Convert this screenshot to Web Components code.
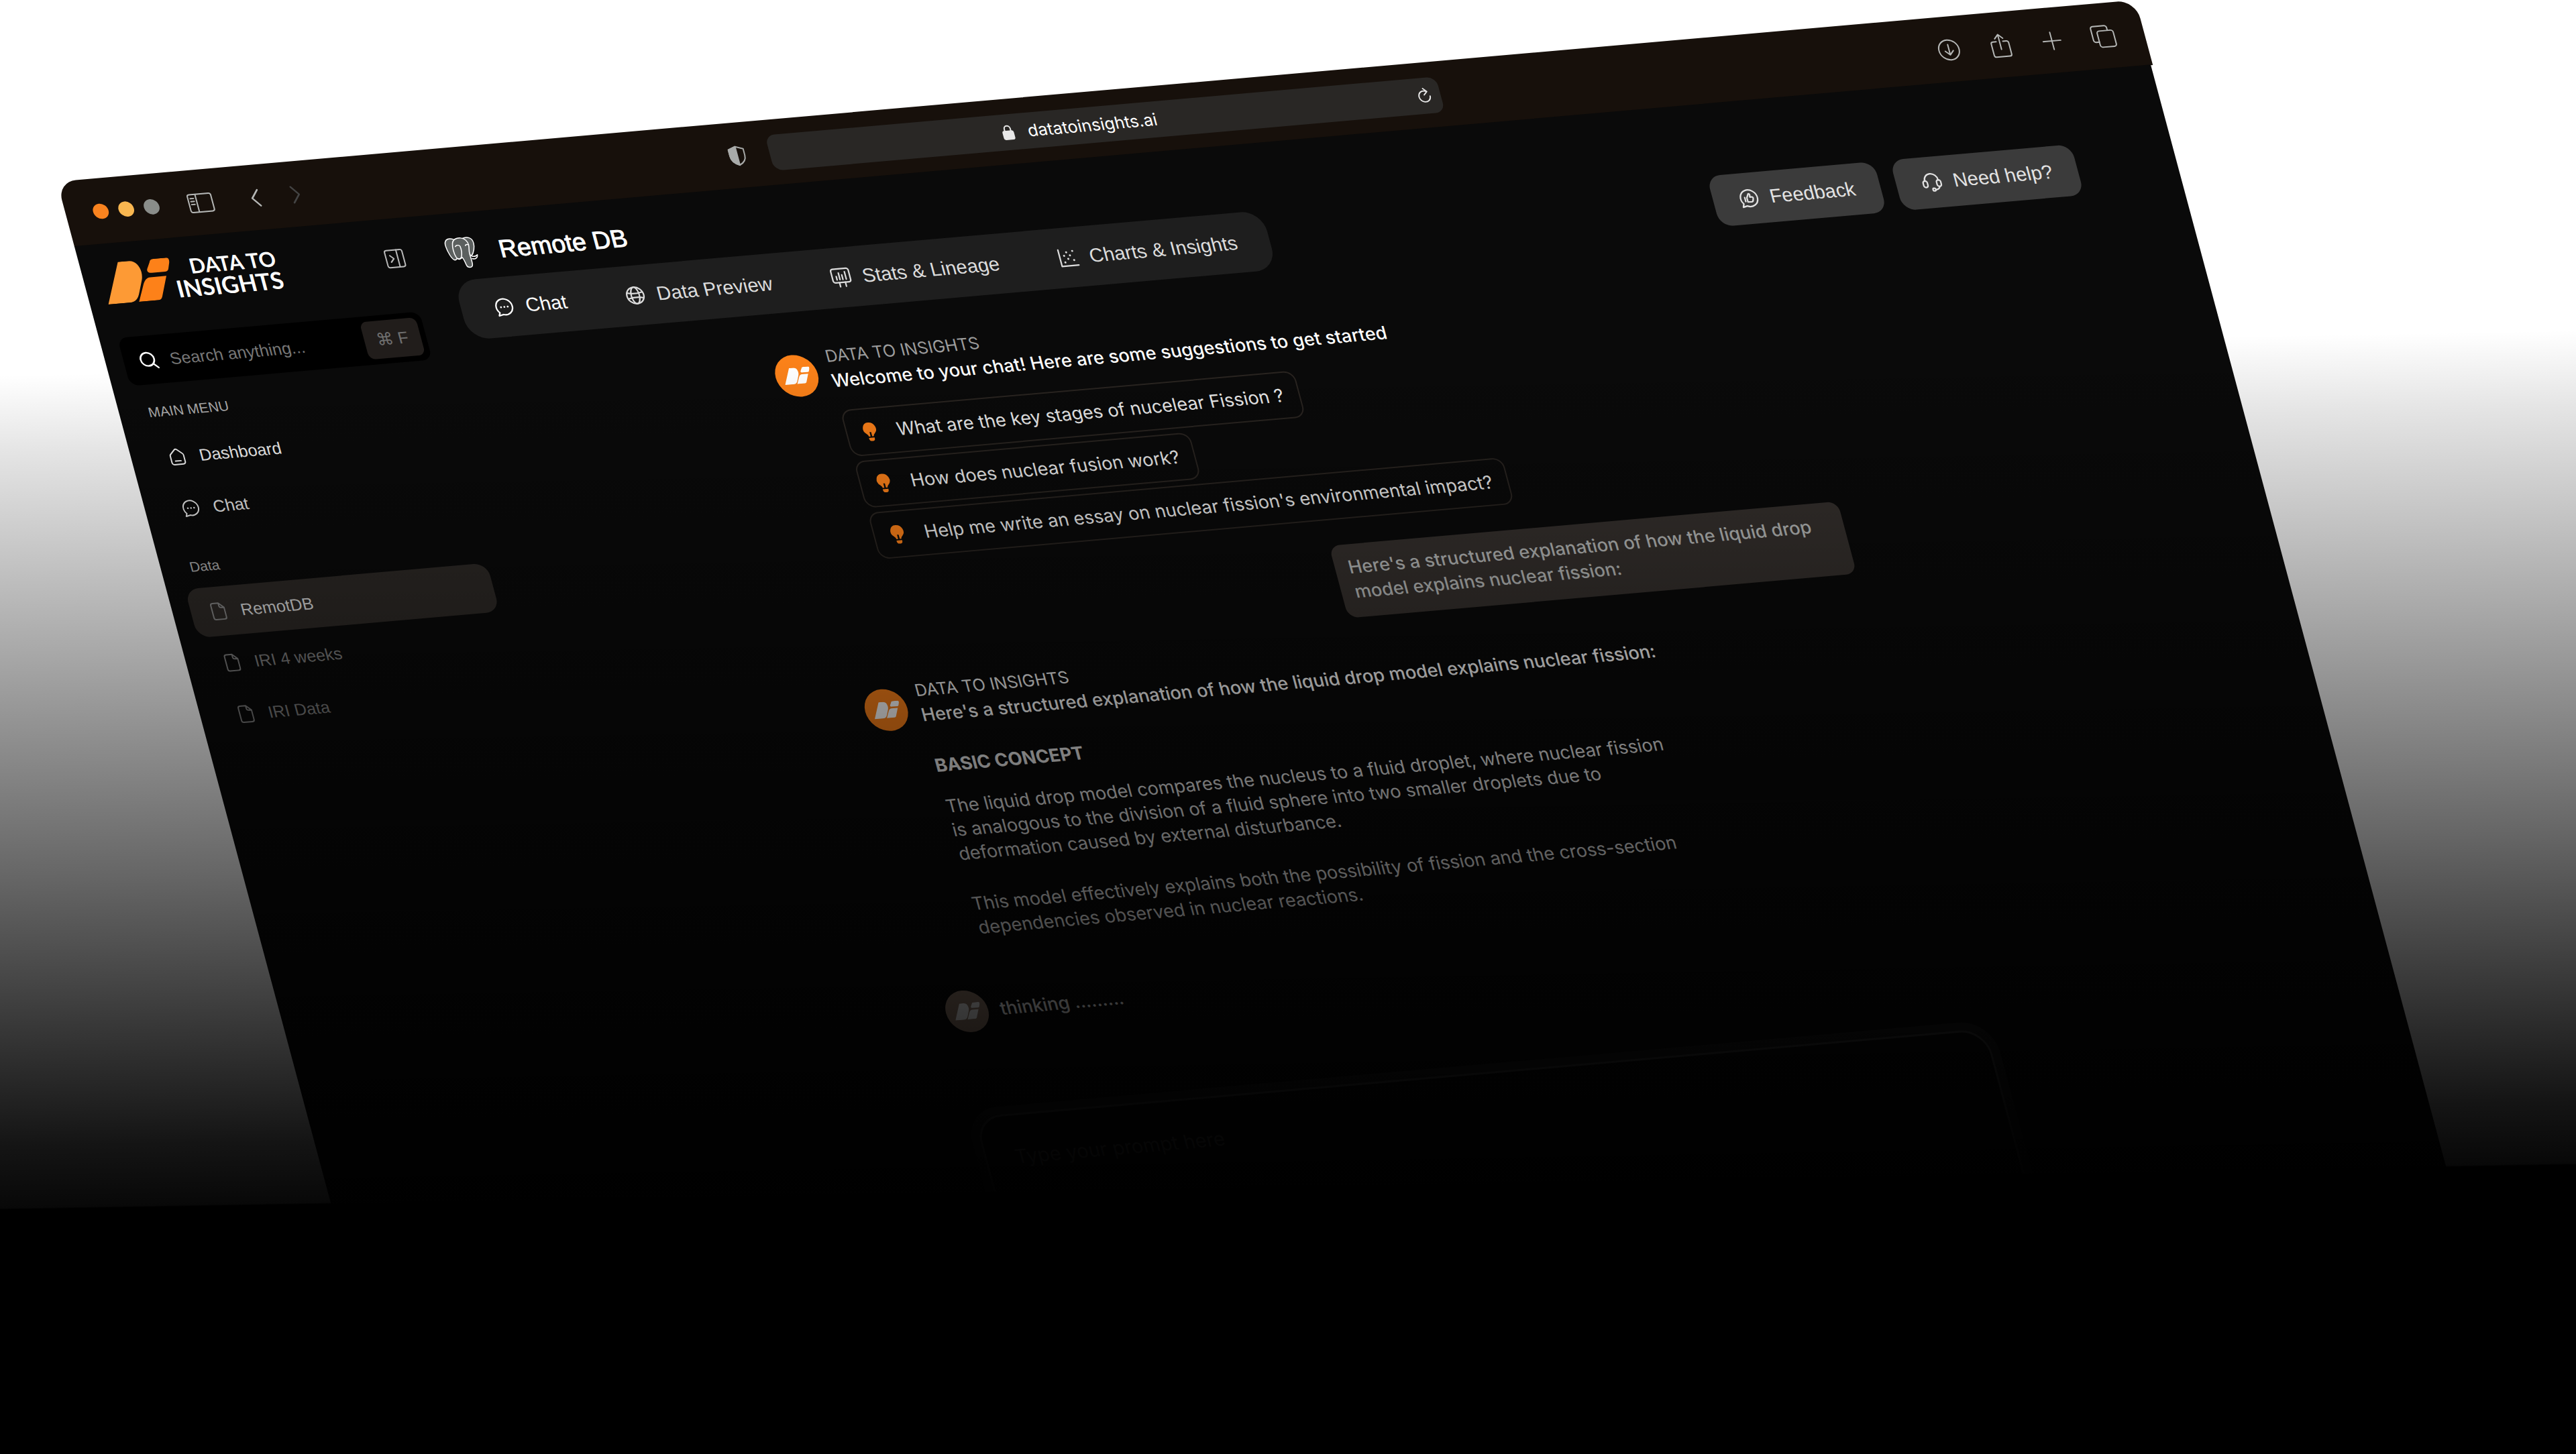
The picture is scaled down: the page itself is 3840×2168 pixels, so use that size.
<!DOCTYPE html>
<html lang="en">
<head>
<meta charset="utf-8">
<title>Data to Insights</title>
<style>
  html, body { margin: 0; height: 100%; background: #fff; }
  body { font-family: Inter, "Noto Sans", sans-serif; color: #fff; }
</style>
</head>
<body>
<tilted-stage>
  <browser-window>
    <window-bar slot="bar" address="datatoinsights.ai"></window-bar>
    <side-bar slot="side">
      <nav-group heading="MAIN MENU">
        <nav-item icon="home" tone="bright">Dashboard</nav-item>
        <nav-item icon="chat" tone="normal">Chat</nav-item>
      </nav-group>
      <nav-group heading="Data">
        <nav-item icon="file" tone="active">RemotDB</nav-item>
        <nav-item icon="file" tone="dim">IRI 4 weeks</nav-item>
        <nav-item icon="file" tone="dim">IRI Data</nav-item>
      </nav-group>
    </side-bar>
    <page-header heading="Remote DB">
      <tab-bar slot="tabs">
        <tab-button icon="chat" active>Chat</tab-button>
        <tab-button icon="globe">Data Preview</tab-button>
        <tab-button icon="board">Stats &amp; Lineage</tab-button>
        <tab-button icon="scatter">Charts &amp; Insights</tab-button>
      </tab-bar>
      <action-button slot="actions" icon="feedback">Feedback</action-button>
      <action-button slot="actions" icon="headset">Need help?</action-button>
    </page-header>
    <chat-thread>
      <bot-message name="DATA TO INSIGHTS">
        <span slot="lead">Welcome to your chat! Here are some suggestions to get started</span>
        <suggestion-list>
          <suggestion-chip>What are the key stages of nucelear Fission ?</suggestion-chip>
          <suggestion-chip>How does nuclear fusion work?</suggestion-chip>
          <suggestion-chip>Help me write an essay on nuclear fission's environmental impact?</suggestion-chip>
        </suggestion-list>
      </bot-message>
      <user-message>Here's a structured explanation of how the liquid drop model explains nuclear fission:</user-message>
      <bot-message name="DATA TO INSIGHTS" strong>
        <span slot="lead">Here's a structured explanation of how the liquid drop model explains nuclear fission:</span>
        <text-section heading="BASIC CONCEPT">
          <p>The liquid drop model compares the nucleus to a fluid droplet, where nuclear fission is analogous to the division of a fluid sphere into two smaller droplets due to deformation caused by external disturbance.</p>
          <p>This model effectively explains both the possibility of fission and the cross-section dependencies observed in nuclear reactions.</p>
        </text-section>
      </bot-message>
      <bot-message pending>
        <span slot="lead">thinking .........</span>
      </bot-message>
      <prompt-box placeholder="Type your prompt here"></prompt-box>
    </chat-thread>
  </browser-window>
</tilted-stage>

<script>
const ICONS = {
  sidebar: ['0 0 38 30', '<rect x="1.5" y="1.5" width="35" height="27" rx="3"/><path d="M13.5 2v26M5 7.5h5M5 12h5M5 16.5h5"/>'],
  back: ['0 0 16 28', '<path d="M13 2 3 14l10 12"/>'],
  forward: ['0 0 16 28', '<path d="M3 2l10 12L3 26"/>'],
  shield: ['0 0 28 32', '<path d="M14 2 25 6v10c0 7-4 11-11 14C7 27 3 23 3 16V6z"/><path d="M14 2v28C7 27 3 23 3 16V6z" fill="currentColor"/>'],
  lock: ['0 0 18 24', '<path d="M4.5 11V7a4.5 4.5 0 0 1 9 0v4"/><rect x="1.5" y="10.5" width="15" height="12" rx="2" fill="currentColor"/>'],
  reload: ['0 0 24 26', '<path d="M17 6.5A9 9 0 1 0 21 14M12 1l5.5 5.3L12 11.5"/>'],
  download: ['0 0 34 34', '<circle cx="17" cy="17" r="15"/><path d="M17 9v15M11 18.5l6 6 6-6"/>'],
  share: ['0 0 32 38', '<path d="M11 13H6a3 3 0 0 0-3 3v17a3 3 0 0 0 3 3h20a3 3 0 0 0 3-3V16a3 3 0 0 0-3-3h-5M16 25V3M10 8.5 16 2.5l6 6"/>'],
  plus: ['0 0 28 28', '<path d="M14 1v26M1 14h26"/>'],
  tabs: ['0 0 38 36', '<path d="M11 26H6.5A3.5 3.5 0 0 1 3 22.5v-17A3.5 3.5 0 0 1 6.5 2h17A3.5 3.5 0 0 1 27 5.5V9"/><rect x="11" y="9.5" width="24" height="24.5" rx="3.5"/>'],
  collapse: ['0 0 30 30', '<rect x="2" y="2" width="26" height="26" rx="3"/><path d="M19.5 2v26M8.5 10l5 5-5 5"/>'],
  search: ['0 0 28 28', '<circle cx="12.5" cy="12.5" r="10"/><path d="M20 20l6 6"/>'],
  home: ['0 0 24 24', '<path d="M3.5 10.6c0-1 .4-1.7 1.1-2.3l5.7-5.2a2.5 2.5 0 0 1 3.4 0l5.7 5.2c.7.6 1.1 1.3 1.1 2.3V19a3 3 0 0 1-3 3h-11a3 3 0 0 1-3-3zM8.5 17.5h7"/>'],
  chat: ['0 0 24 24', '<path d="M3.4 22.2 5 18.6A9.6 9.6 0 1 1 8.8 21Z"/><path d="M8 12h.01M12 12h.01M16 12h.01" stroke-width="2.2"/>'],
  file: ['0 0 24 24', '<path d="M14 1.5H6.5A2.5 2.5 0 0 0 4 4v16a2.5 2.5 0 0 0 2.5 2.5h11A2.5 2.5 0 0 0 20 20V7.5zM14 1.5V5a2.5 2.5 0 0 0 2.5 2.5H20"/>'],
  globe: ['0 0 24 24', '<circle cx="12" cy="12" r="10"/><ellipse cx="12" cy="12" rx="4.8" ry="10"/><path d="M3 8.5c5 1.3 13 1.3 18 0M3 15.5c5-1.3 13-1.3 18 0"/>'],
  board: ['0 0 24 24', '<rect x="1.5" y="1.5" width="21" height="16.5" rx="2.5"/><path d="M6.5 10.5v4M10 6.5v8M13.5 9v5.5M17.5 5.5v9M8.5 18v5M15.5 18v5"/>'],
  scatter: ['0 0 24 24', '<path d="M2 2v20h20"/><path d="M7 17.5h.01M7.5 9.5h.01M11.5 13.5h.01M14.5 9.5h.01M18.5 4.5h.01M18 15.5h.01M11 5.5h.01" stroke-width="2.4"/>'],
  feedback: ['0 0 24 24', '<path d="M3 22.5 4.5 18.5A10 10 0 1 1 8 21.3Z"/><path d="M7.5 11v5M10 16.5v-5l2.6-4.6c1.4 0 1.8 1 1.4 2.2L13.6 11h2.2c1.2 0 1.7.8 1.4 1.8l-.8 2.7c-.3.8-.8 1.2-1.7 1.2z"/>'],
  headset: ['0 0 24 24', '<path d="M4 10.5V10a8 8 0 0 1 16 0v.5"/><rect x="1.5" y="10" width="5" height="8" rx="2.5"/><rect x="17.5" y="10" width="5" height="8" rx="2.5"/><path d="M20 18c-.6 2.2-2.5 3.5-5.5 3.5"/><circle cx="12.8" cy="21.2" r="1.7"/>'],
  bulb: ['0 0 24 30', '<path d="M12 1a9.5 9.5 0 0 0-6.2 16.8c1.5 1.4 2.2 2.3 2.5 4.2h2.5v-6.5h2.4V22h2.5c.3-1.9 1-2.8 2.5-4.2A9.5 9.5 0 0 0 12 1zM7.8 24h8.4v1.5c0 2-1.3 3.5-3.2 3.5h-2c-1.9 0-3.2-1.5-3.2-3.5z" fill="currentColor" stroke="none"/>'],
  elephant: ['0 0 46 48', '<g fill="#5c605f"><path d="M29 3c8-3 15 0 15 8 0 6-3 14-8 19l-5-6"/><path d="M16 3C7-1 1 4 2 13c.5 8 4 20 8 21 3 .6 5-3 7-7"/><path d="M13 9c2-6 8-8 14-7 6 1 9 6 9 11 0 5-2 8-2 14 0 6 1 12 0 16-1 5-8 5-9 0-1-5-1-8-3-12-3 3-8 2-9-1-2-6-2-15 0-21z"/></g><path d="M36 30c3 2 6 1 9-1-1 5-5 7-9 5M16 14c2-2 5-2 7 0 1 6 0 11-2 16M31 14c1-2 3-2 5-1M20 31c-1 3-4 3-6 1"/>']
};

function define(name, html, setup) {
  const template = document.createElement('template');
  template.innerHTML = html;
  customElements.define(name, class extends HTMLElement {
    connectedCallback() {
      if (this.shadowRoot) return;
      const root = this.attachShadow({ mode: 'open' });
      root.append(template.content.cloneNode(true));
      if (setup) setup(this, root);
    }
  });
}

define('ui-icon', `
  <style>
    :host { display: inline-flex; flex: none; width: var(--w, 28px); height: var(--h, 28px); }
    svg { width: 100%; height: 100%; overflow: visible; fill: none; stroke: currentColor;
      stroke-width: var(--stroke, 2); stroke-linecap: round; stroke-linejoin: round; }
  </style><svg aria-hidden="true"></svg>`, (host, root) => {
  const [box, paths] = ICONS[host.getAttribute('name')];
  const svg = root.querySelector('svg');
  svg.setAttribute('viewBox', box);
  svg.innerHTML = paths;
});

define('brand-mark', `
  <style>
    :host { display: block; flex: none; width: var(--w, 106px); color: #fd8119; }
    svg { display: block; width: 100%; fill: currentColor; }
    .first { fill: var(--first, currentColor); }
  </style>
  <svg viewBox="0 0 106 62" aria-hidden="true">
    <path class="first" d="M30.5 0H46c10 0 15 8 15 18 0 4-1 9-3 13l-8 17c-4 9-9 14-18 14H0z"/>
    <path d="M77 4c1-3 4-4 8-4h16c4 0 6 2 5 6l-4 10c-1 3-3 4.5-6 4.5H76c-5 0-7-2-5.5-6z"/>
    <path d="M72 27h24L82 57c-1.5 3.5-4 5-7 5H46l12-23c4-8 8-12 14-12z"/>
  </svg>`);

define('tilted-stage', `
  <style>
    :host { display: block; position: relative; box-sizing: border-box; height: 100vh; overflow: hidden;
      padding: 271px 0 0 85px; background: #fff; }
    .tilt { width: 81vw; transform-origin: 0 0; transform: rotate(-5deg) skewX(10deg); }
    .veil { position: absolute; inset: 0; pointer-events: none;
      background: linear-gradient(179deg, rgba(0,0,0,0) 25%, rgba(0,0,0,.1) 30%, rgba(0,0,0,.42) 48%,
        rgba(0,0,0,.6) 58.5%, rgba(0,0,0,.78) 68.5%, rgba(0,0,0,.92) 76.5%, rgba(0,0,0,.97) 80.6%, #000 80.7%); }
  </style>
  <div class="tilt"><slot></slot></div><div class="veil"></div>`);

define('browser-window', `
  <style>
    :host { display: block; }
    .body { display: flex; min-height: 150vh; margin: -1px 3px 0 0; padding-top: 1px; background: #0a0a0a; }
    main { flex: 1; min-width: 0; padding: 35px 148px 0 0; }
  </style>
  <slot name="bar"></slot>
  <div class="body"><slot name="side"></slot><main><slot></slot></main></div>`);

define('window-bar', `
  <style>
    :host { display: grid; grid-template-columns: 1fr minmax(0, 1004px) 1fr; align-items: center; column-gap: 34px;
      box-sizing: border-box; height: 99px; padding: 0 41px 0 41px; border-radius: 28px 28px 0 0;
      background: #17100b; color: #b5b7b6; }
    .left, .right, .dots, .address, .where { display: flex; align-items: center; }
    .dots { gap: 15px; margin-right: 42px; }
    .dots i { width: 23px; height: 23px; border-radius: 50%; background: #f9831f; }
    .dots i:nth-child(2) { background: #f8b650; }
    .dots i:nth-child(3) { background: #8a8d8a; }
    button { display: inline-flex; align-items: center; justify-content: center; width: 40px; height: 40px;
      padding: 0; border: 0; background: none; color: inherit; }
    .left button + button { margin-left: 42px; }
    .left button + button + button { margin-left: 20px; color: #444; }
    .left button.shield { margin-left: auto; width: 28px; color: #a9abaa; }
    .right { justify-content: flex-end; gap: 37px; }
    .address { height: 54px; padding-right: 4px; gap: 30px; border-radius: 14px; background: #292725; color: #e8e8e8; }
    .where { flex: 1; justify-content: center; gap: 20px; }
    .where label { display: inline-flex; }
    input { width: 196px; padding: 0; border: 0; background: none; color: #fff; font: 25px/30px Inter, sans-serif; }
  </style>
  <div class="left">
    <div class="dots"><i></i><i></i><i></i></div>
    <button aria-label="Show sidebar"><ui-icon name="sidebar" style="--w:38px;--h:30px"></ui-icon></button>
    <button aria-label="Back"><ui-icon name="back" style="--w:16px;--h:28px;--stroke:2.5"></ui-icon></button>
    <button aria-label="Forward"><ui-icon name="forward" style="--w:16px;--h:28px;--stroke:2.5"></ui-icon></button>
    <button class="shield" aria-label="Privacy report"><ui-icon name="shield" style="--w:28px;--h:32px"></ui-icon></button>
  </div>
  <div class="address">
    <div class="where">
      <label for="url" aria-label="Address"><ui-icon name="lock" style="--w:18px;--h:24px"></ui-icon></label>
      <input id="url" type="text">
    </div>
    <button aria-label="Reload"><ui-icon name="reload" style="--w:22px;--h:24px"></ui-icon></button>
  </div>
  <div class="right">
    <button aria-label="Downloads"><ui-icon name="download" style="--w:34px;--h:34px"></ui-icon></button>
    <button aria-label="Share"><ui-icon name="share" style="--w:32px;--h:38px"></ui-icon></button>
    <button aria-label="New tab"><ui-icon name="plus"></ui-icon></button>
    <button aria-label="Tab overview"><ui-icon name="tabs" style="--w:38px;--h:36px"></ui-icon></button>
  </div>`, (host, root) => { root.querySelector('input').value = host.getAttribute('address'); });

define('side-bar', `
  <style>
    :host { display: block; flex: none; box-sizing: border-box; width: 541px; padding: 28px 62px 0 27px;
      font-family: "Liberation Sans", sans-serif; }
    .brand { display: flex; align-items: center; height: 62px; margin-bottom: 51px; }
    .name { width: 156px; margin-right: auto; text-align: right; color: #fff; }
    .name span { display: block; font: 700 35px/32px Lato, sans-serif; }
    .name span:first-child { font-size: 31px; }
    .brand button { padding: 0; border: 0; background: none; color: #b9b9b9; display: flex; }
    .search { display: flex; align-items: center; gap: 18px; box-sizing: border-box; height: 73px;
      padding: 8px 8px 8px 23px; border-radius: 14px; background: #000; }
    .search label { display: flex; color: #fff; }
    input { flex: 1; min-width: 0; padding: 0; border: 0; background: none; color: #fff;
      font: 25px/30px "Liberation Sans", sans-serif; }
    input::placeholder { color: #777; opacity: 1; }
    kbd { box-sizing: border-box; width: 84px; height: 57px; border-radius: 10px; background: #211d1b;
      color: #6f6f6f; font: 25px/57px "Liberation Sans", "DejaVu Sans", sans-serif; text-align: center; }
  </style>
  <div class="brand">
    <brand-mark style="--first:#fd9a35"></brand-mark>
    <div class="name"><span>DATA TO</span><span>INSIGHTS</span></div>
    <button aria-label="Collapse sidebar"><ui-icon name="collapse" style="--w:30px;--h:30px"></ui-icon></button>
  </div>
  <div class="search">
    <label for="q" aria-label="Search"><ui-icon name="search" style="--stroke:2.5"></ui-icon></label>
    <input id="q" type="text" placeholder="Search anything...">
    <kbd>⌘ F</kbd>
  </div>
  <nav><slot></slot></nav>`);

define('nav-group', `
  <style>
    :host { display: block; padding-top: 28px; }
    :host(:not(:first-of-type)) { padding-top: 37px; }
    h2 { margin: 0 0 18px 16px; font: 400 21px/28px "Liberation Sans", sans-serif; color: #adadad; }
    .items { display: flex; flex-direction: column; gap: 4px; }
  </style><h2></h2><div class="items"><slot></slot></div>`, (host, root) => {
  root.querySelector('h2').textContent = host.getAttribute('heading');
});

const putIcon = (host, root) => {
  const icon = document.createElement('ui-icon');
  icon.setAttribute('name', host.getAttribute('icon'));
  root.querySelector('.icon').append(icon);
};

define('nav-item', `
  <style>
    :host { display: block; color: #e6e6e6; }
    :host([tone="bright"]) { color: #f4f4f4; }
    :host([tone="active"]) { color: #dcdcdc; --ink: #858585; --fill: #2d2926; }
    :host([tone="dim"]) { color: #7c7c7c; }
    a { display: flex; align-items: center; gap: 19px; height: 74px; padding-left: 27px; border-radius: 20px;
      background: var(--fill, none); color: inherit; text-decoration: none; font: 25px/32px "Liberation Sans", sans-serif; }
    .icon { display: flex; color: var(--ink, inherit); --stroke: 1.7; }
  </style><a href="#"><span class="icon"></span><slot></slot></a>`, putIcon);

define('page-header', `
  <style>
    :host { display: block; font-family: "Liberation Sans", sans-serif; }
    .title { display: flex; align-items: center; gap: 33px; margin-bottom: 17px; }
    h1 { margin: 0; font: 400 37px/48px "Liberation Sans", sans-serif; -webkit-text-stroke: 1px currentColor; }
    .row { display: flex; align-items: center; justify-content: space-between; }
    .actions { display: flex; gap: 24px; }
  </style>
  <div class="title"><ui-icon name="elephant" style="--w:46px;--h:48px;--stroke:1.5"></ui-icon><h1></h1></div>
  <div class="row"><slot name="tabs"></slot><div class="actions"><slot name="actions"></slot></div></div>`, (host, root) => {
  root.querySelector('h1').textContent = host.getAttribute('heading');
});

define('tab-bar', `
  <style>
    :host { display: flex; box-sizing: border-box; height: 90px; padding: 0 5px; border-radius: 32px; background: #1e1e1e; }
  </style><slot></slot>`, host => host.setAttribute('role', 'tablist'));

const iconButton = css => `
  <style>
    :host { display: flex; }
    button { display: flex; align-items: center; gap: 17px; border: 0; white-space: nowrap;
      font: 29px/36px "Liberation Sans", sans-serif; ${css} }
    .icon { display: flex; --w: 30px; --h: 30px; --stroke: 1.8; }
  </style><button><span class="icon"></span><slot></slot></button>`;
define('tab-button', iconButton('padding: 0 44px; background: none; color: var(--ink, #dcdcdc);'), (host, root) => {
  putIcon(host, root);
  root.querySelector('button').setAttribute('role', 'tab');
  if (host.hasAttribute('active')) host.style.setProperty('--ink', '#fff');
});
define('action-button', iconButton('height: 77px; padding: 0 38px; border-radius: 20px; background: #3b3b3b; color: #e2e2e2;'), putIcon);

define('chat-thread', `
  <style>
    :host { display: flex; flex-direction: column; max-width: 1514px; margin: 51px 0 0 433px; }
  </style><slot></slot>`);

define('bot-message', `
  <style>
    :host { display: grid; grid-template-columns: 63px minmax(0, 1fr); column-gap: 18px; font: 27px/38px Inter, sans-serif; color: #fff; }
    :host([strong]) { margin-top: 32px; --name: #f4f4f4; }
    :host([pending]) { margin-top: 73px; --disc: #98806f; align-items: center; }
    .avatar { display: flex; align-items: center; justify-content: center; width: 63px; height: 63px; margin-top: 13px;
      border-radius: 50%; background: var(--disc, #fb8119); }
    :host([pending]) .avatar { margin-top: 0; }
    brand-mark { --w: 42px; color: #fff; }
    .name { display: block; font-size: 25px; color: var(--name, #9c9c9c); }
    .name:empty { display: none; }
    .lead { margin: 0; font-weight: 500; }
  </style>
  <div class="avatar"><brand-mark></brand-mark></div>
  <div><span class="name"></span><p class="lead"><slot name="lead"></slot></p><slot></slot></div>`, (host, root) => {
  root.querySelector('.name').textContent = host.getAttribute('name') || '';
});

define('suggestion-list', `
  <style>
    :host { display: flex; flex-direction: column; align-items: flex-start; gap: 7px; margin-top: 25px; }
  </style><slot></slot>`);

define('suggestion-chip', `
  <style>
    :host { display: block; }
    button { display: flex; align-items: center; gap: 28px; box-sizing: border-box; height: 71px; padding: 0 22px;
      border: 2px solid #2a2521; border-radius: 16px; background: none; color: #ededed; font: 27px/36px Inter, sans-serif; white-space: nowrap; }
    ui-icon { color: #fd8119; --w: 24px; --h: 30px; }
  </style><button><ui-icon name="bulb"></ui-icon><slot></slot></button>`);

define('user-message', `
  <style>
    :host { display: block; align-self: flex-end; box-sizing: border-box; width: 761px; margin: 38px 10px 0 0;
      padding: 16px 20px 20px; border-radius: 16px; background: #36312e; color: #bcbebd; font: 500 27px/37px Inter, sans-serif; }
  </style><slot></slot>`);

define('text-section', `
  <style>
    :host { display: block; max-width: 1085px; margin-top: 40px; font: 27px/36px Inter, sans-serif; color: #f4f4f4; }
    h3 { margin: 0 0 26px; font-size: 27px; font-weight: 700; }
    ::slotted(p) { margin: 0 0 40px; }
    ::slotted(p:last-child) { margin: 0; }
  </style><h3></h3><slot></slot>`, (host, root) => {
  root.querySelector('h3').textContent = host.getAttribute('heading');
});

define('prompt-box', `
  <style>
    :host { display: block; margin: 114px -12px 0; padding: 12px; border-radius: 50px; background: #1a1a1a; }
    textarea { display: block; box-sizing: border-box; width: 100%; height: 260px; padding: 44px 42px; resize: none;
      border: 3px solid #3a3a3a; border-radius: 40px; background: #0a0a0a; color: #fff; font: 29px/36px Inter, sans-serif; }
    textarea::placeholder { color: #585858; opacity: 1; }
  </style><textarea></textarea>`, (host, root) => {
  const area = root.querySelector('textarea');
  area.placeholder = host.getAttribute('placeholder');
  area.setAttribute('aria-label', host.getAttribute('placeholder'));
});
</script>
</body>
</html>
